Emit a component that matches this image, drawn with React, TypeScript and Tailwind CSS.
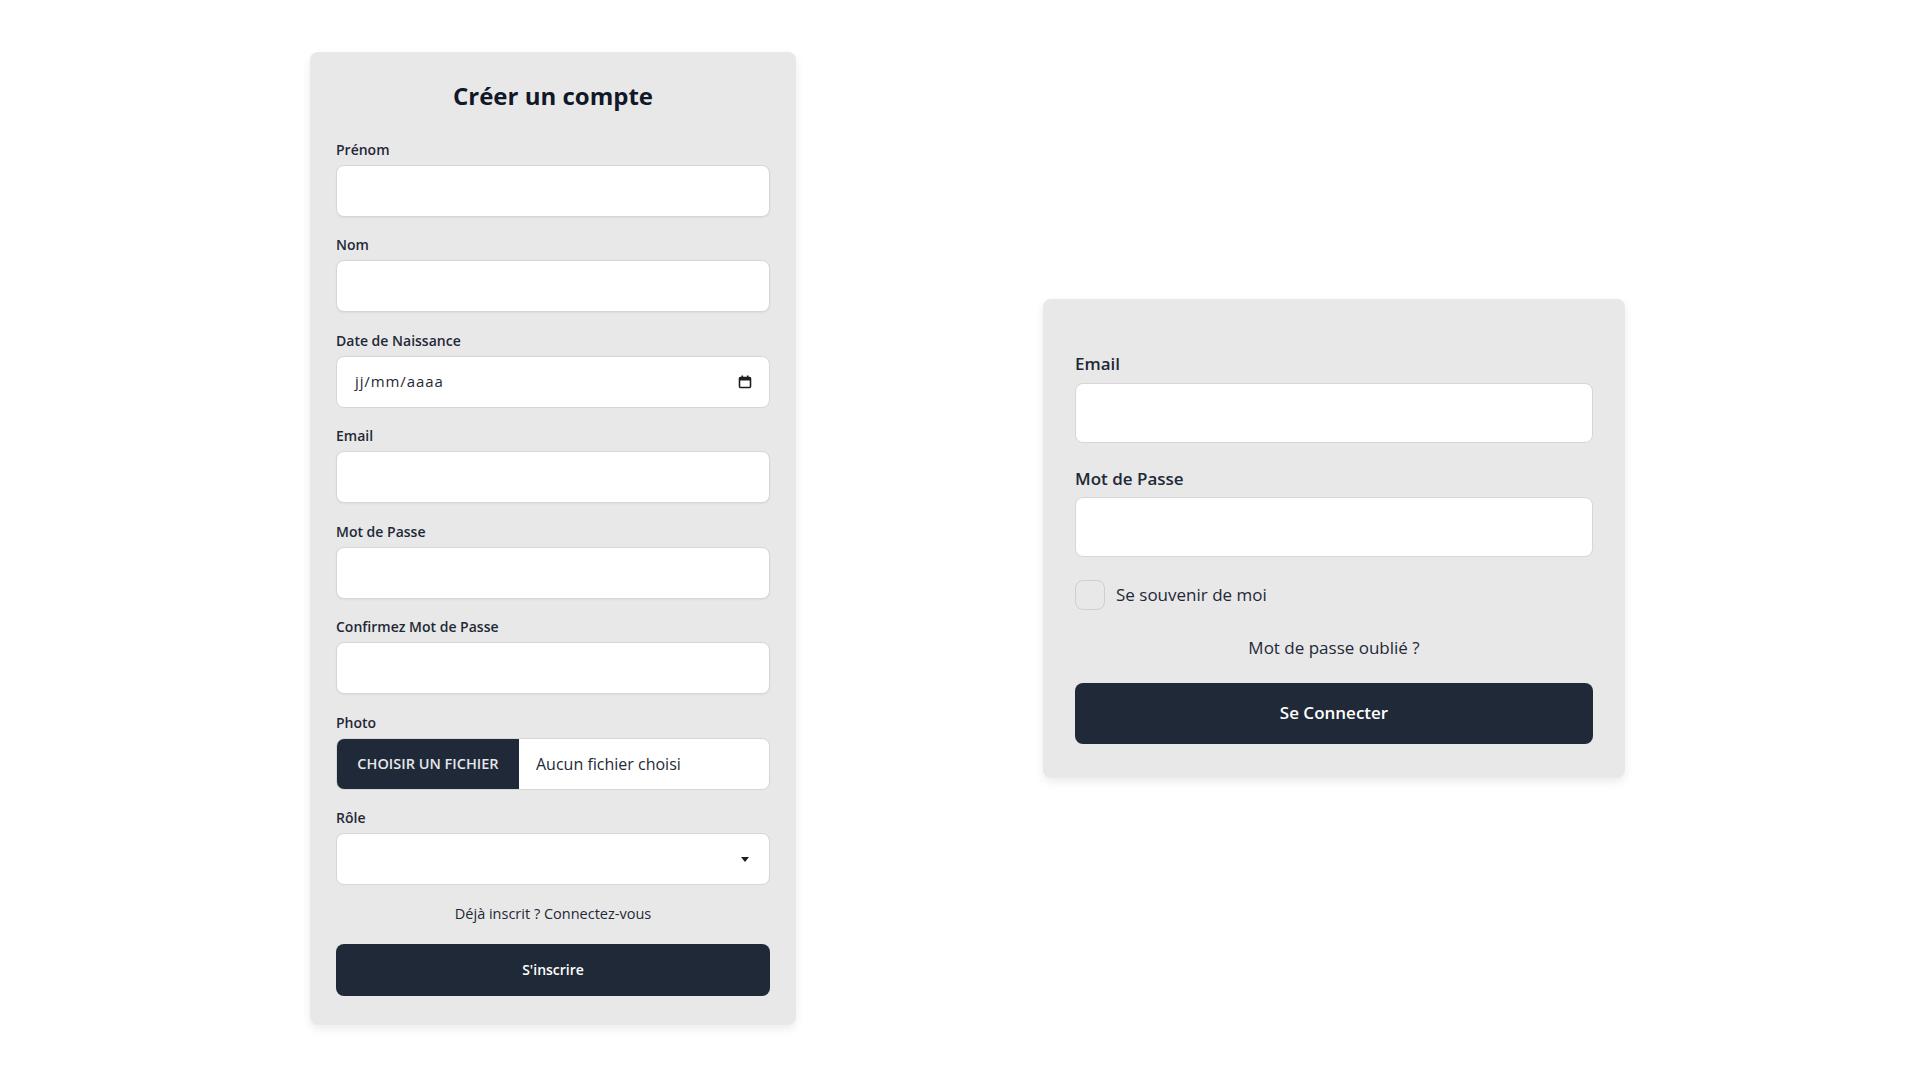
import React from "react";

const font = { fontFamily: '"Open Sans", "Noto Sans", sans-serif' };

function Field({ label, children }: { label: string; children: React.ReactNode }) {
  return (
    <div className="mb-[18.5px]">
      <label className="block text-[14px] leading-[20px] font-semibold text-[#1f2937] mb-[5px]">{label}</label>
      {children}
    </div>
  );
}

function TextBox() {
  return <div className="h-[52px] w-full rounded-lg border border-[#d6d6d9] bg-white shadow-[0_1px_2px_rgba(0,0,0,0.05)]" />;
}

function CalendarIcon() {
  return (
    <svg width="14" height="14" viewBox="0 0 14 14" fill="none">
      <rect x="1.5" y="2.5" width="11" height="10" rx="1" stroke="#1f1f1f" strokeWidth="1.6" />
      <rect x="1.5" y="2.5" width="11" height="3" fill="#1f1f1f" />
      <rect x="3.5" y="0.5" width="1.6" height="3" fill="#1f1f1f" />
      <rect x="8.9" y="0.5" width="1.6" height="3" fill="#1f1f1f" />
    </svg>
  );
}

export default function App() {
  return (
    <div className="min-h-screen w-full bg-white flex items-center pl-[310px] pb-[4px] gap-[247px]" style={font}>
      {/* Register card */}
      <div className="w-[486px] h-[973px] rounded-lg bg-[#e8e8e8] shadow-[0_4px_10px_rgba(0,0,0,0.08)] px-[26px] pt-[28px]">
        <h1 className="text-center text-[24px] leading-[32px] font-bold text-[#111827] mb-[28px]">Créer un compte</h1>
        <Field label="Prénom"><TextBox /></Field>
        <Field label="Nom"><TextBox /></Field>
        <Field label="Date de Naissance">
          <div className="h-[52px] w-full rounded-lg border border-[#d6d6d9] bg-white flex items-center justify-between pl-[18px] pr-[17px]">
            <span className="text-[15px] text-[#1f2937] tracking-[0.9px]">jj/mm/aaaa</span>
            <CalendarIcon />
          </div>
        </Field>
        <Field label="Email"><TextBox /></Field>
        <Field label="Mot de Passe"><TextBox /></Field>
        <Field label="Confirmez Mot de Passe"><TextBox /></Field>
        <Field label="Photo">
          <div className="h-[52px] w-full rounded-lg border border-[#d6d6d9] bg-white flex items-stretch overflow-hidden">
            <div className="w-[182px] bg-[#1f2937] flex items-center justify-center text-[14.5px] font-semibold text-[#e5e7eb] uppercase">Choisir un fichier</div>
            <div className="flex items-center pl-[17px] text-[16px] text-[#1f2937]">Aucun fichier choisi</div>
          </div>
        </Field>
        <Field label="Rôle">
          <div className="h-[52px] w-full rounded-lg border border-[#d6d6d9] bg-white flex items-center justify-end pr-[20px]">
            <svg width="8" height="5" viewBox="0 0 8 5"><path d="M0 0 L8 0 L4 5 Z" fill="#1f1f1f" /></svg>
          </div>
        </Field>
        <p className="text-center text-[14.5px] leading-[20px] text-[#1f2937] mt-[1.5px]">Déjà inscrit ? Connectez-vous</p>
        <button className="mt-[20px] h-[52px] w-full rounded-lg bg-[#1f2937] text-white text-[14px] font-semibold">S'inscrire</button>
      </div>

      {/* Login card */}
      <div className="w-[582px] h-[479px] rounded-lg bg-[#e8e8e8] shadow-[0_4px_10px_rgba(0,0,0,0.08)] px-[32px] pt-[53px]">
        <label className="block text-[17px] leading-[24px] font-semibold text-[#1f2937] mb-[7px]">Email</label>
        <div className="h-[60px] w-full rounded-lg border border-[#d6d6d9] bg-white" />
        <label className="block text-[17px] leading-[24px] font-semibold text-[#1f2937] mt-[24px] mb-[6px]">Mot de Passe</label>
        <div className="h-[60px] w-full rounded-lg border border-[#d6d6d9] bg-white" />
        <div className="mt-[23px] flex items-center gap-[11px]">
          <div className="w-[30px] h-[30px] rounded-[8px] border border-[#cfcfd3] bg-[#e8e8e8]" />
          <span className="text-[17px] leading-[24px] text-[#1f2937]">Se souvenir de moi</span>
        </div>
        <p className="mt-[26px] text-center text-[17px] leading-[24px] text-[#1f2937]">Mot de passe oublié ?</p>
        <button className="mt-[23px] h-[61px] w-full rounded-lg bg-[#1f2937] text-white text-[17px] font-semibold">Se Connecter</button>
      </div>
    </div>
  );
}
